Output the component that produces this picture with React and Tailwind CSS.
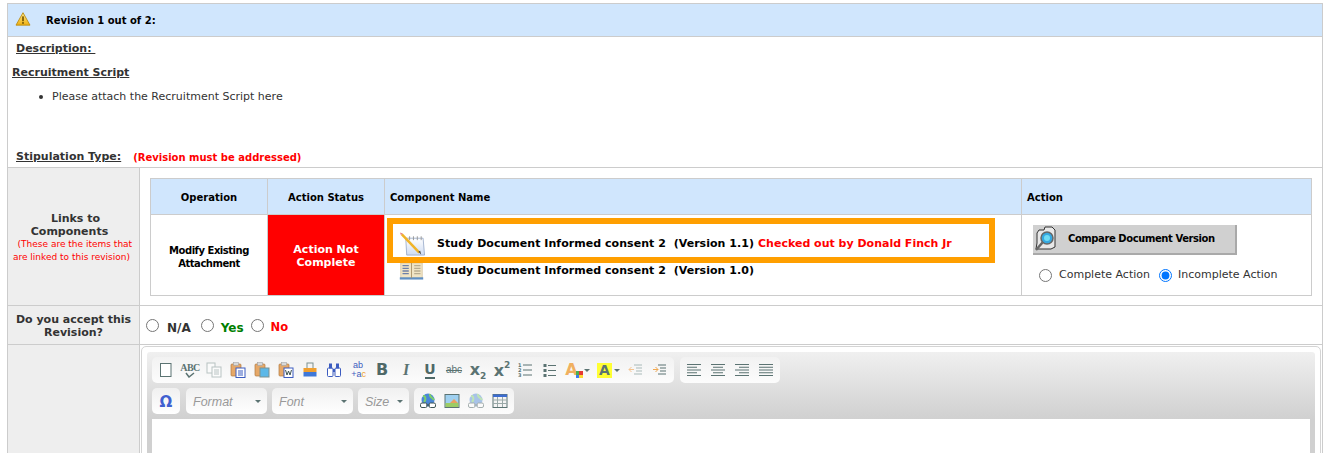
import React from "react";

const Warn = () => (
  <svg width="16" height="14" viewBox="0 0 18 16">
    <defs>
      <linearGradient id="w" x1="0" y1="0" x2="0" y2="1">
        <stop offset="0" stopColor="#ffe98a" />
        <stop offset="1" stopColor="#f0b010" />
      </linearGradient>
    </defs>
    <path d="M9 .8 17 15H1z" fill="url(#w)" stroke="#b98a10" strokeLinejoin="round" />
    <rect x="8" y="5" width="2" height="5.5" fill="#7a5a05" />
    <rect x="8" y="11.5" width="2" height="2" fill="#7a5a05" />
  </svg>
);

const Notepad = () => (
  <svg width="27" height="26" viewBox="0 0 28 26">
    <defs>
      <linearGradient id="n" x1="0" y1="0" x2="0" y2="1">
        <stop offset="0" stopColor="#ffffff" />
        <stop offset="1" stopColor="#cfdcf2" />
      </linearGradient>
    </defs>
    <path d="M7 7h18l1.500 17.500H8z" fill="url(#n)" stroke="#8fa3c4" strokeWidth="0.8" />
    <path d="M11 5v4M15 5v4M19 5v4M23 5v4" stroke="#999" strokeWidth="1" />
    <path d="M3 3 21 22" stroke="#f0b429" strokeWidth="2.600" />
    <path d="M1 1 4 2 2 4z" fill="#e8837a" />
    <path d="M20 21 23 24l-1-4z" fill="#444" />
  </svg>
);

const Book = () => (
  <svg width="25" height="18" viewBox="0 0 26 20">
    <path d="M1 1h11l1 1 1-1h11v17H1z" fill="#f0e4c4" stroke="#c9b486" strokeWidth="0.6" />
    <rect x="0" y="17" width="26" height="2.500" fill="#5f8fc4" />
    <path d="M13 1v17" stroke="#a8926a" />
    <path d="M3 4h7M3 7h7M3 10h7M3 13h7" stroke="#6d80a8" strokeWidth="1.400" />
    <path d="M16 4h7M16 7h7M16 10h7M16 13h7" stroke="#b7ac90" strokeWidth="1.400" />
  </svg>
);

const Magnifier = () => (
  <svg width="26" height="26" viewBox="0 0 26 26">
    <path d="M4 7 6 4h5l1-3h7l3 3v17l-4 2H3l1-6z" fill="#e8e8e8" stroke="#333" strokeWidth="1" />
    <circle cx="14" cy="12" r="6" fill="#35a8e0" stroke="#666" strokeWidth="1.500" />
    <circle cx="14" cy="12" r="3" fill="#6fdcf5" />
    <path d="M9.500 16.500 3 24" stroke="#666" strokeWidth="2.500" />
  </svg>
);

const Ico = ({ children }) => (
  <svg width="16" height="16" viewBox="0 0 16 16">{children}</svg>
);

const Paste = ({ children }) => (
  <Ico>
    <rect x="1" y="2" width="10" height="12" rx="1" fill="#e6a868" stroke="#b07a40" strokeWidth="0.7" />
    <rect x="3.500" y="0.500" width="5" height="3" fill="#d8d8d8" stroke="#999" strokeWidth="0.5" />
    {children}
  </Ico>
);

const Lines = ({ rows, color = "#5b7372" }) => (
  <Ico>
    {rows.map(([a, b], i) => (
      <path key={i} d={`M${a} ${2.500 + i * 2.750}H${b}`} stroke={color} strokeWidth="1" />
    ))}
  </Ico>
);

const G = "#5b7372";

const Txt = ({ className, children }) => (
  <span className={"leading-none " + className}>{children}</span>
);

const Globe = ({ faded }) => (
  <Ico>
    <g opacity={faded ? 0.45 : 1}>
      <circle cx="8" cy="7" r="6.500" fill="#4a86d8" />
      <path d="M3 3c3 0 3 4 1 6M10 1c-1 3 3 4 4 6" stroke="#7ccf6a" strokeWidth="2" fill="none" />
      <rect x="0.500" y="10" width="6.500" height="4.500" rx="1.500" fill="#fff" stroke="#3f5554" />
      <rect x="9" y="10" width="6.500" height="4.500" rx="1.500" fill="#fff" stroke="#3f5554" />
      <path d="M6 12h4" stroke="#3f5554" />
    </g>
  </Ico>
);

const tools1 = [
  <Ico><rect x="2.500" y="1.500" width="10.500" height="13" fill="#fff" stroke="#5b7372" /></Ico>,
  <span className="flex flex-col items-center">
    <Txt className="text-[10px] h-[9px] font-bold text-[#5b7372] tracking-[-0.5px] font-['Liberation_Serif',serif]">ABC</Txt>
    <svg width="12" height="6" viewBox="0 0 12 6"><path d="M2 1l3 4 5-4" stroke="#5b7372" strokeWidth="1.500" fill="none" /></svg>
  </span>,
  <Ico>
    <g opacity="0.5">
      <rect x="1" y="1" width="8" height="10" fill="#fff" stroke="#7d9190" />
      <rect x="6" y="5" width="9" height="10" fill="#fff" stroke="#7d9190" />
      <path d="M8 8h5M8 10h5M8 12h5" stroke="#7d9190" />
    </g>
  </Ico>,
  <Paste>
    <rect x="6" y="6" width="9" height="9.500" fill="#fff" stroke="#3c5cc0" />
    <path d="M8 9h5M8 11h5M8 13h5" stroke="#3c5cc0" />
  </Paste>,
  <Paste>
    <rect x="6" y="6" width="9" height="9" fill="#5cb8e8" stroke="#7d9190" />
  </Paste>,
  <Paste>
    <rect x="6" y="6" width="9" height="9.500" fill="#fff" stroke="#3c5cc0" />
    <path d="M7.500 8l1.500 5 1.500-4 1.500 4 1.500-5" stroke="#3f5554" fill="none" />
  </Paste>,
  <Ico>
    <rect x="5" y="1" width="6" height="6" fill="#f4f4f4" stroke="#7d9190" />
    <rect x="1.500" y="6" width="13" height="4" fill="#f0a030" />
    <rect x="1.500" y="10" width="13" height="4.500" fill="#3f78d8" />
  </Ico>,
  <Ico>
    <rect x="1.500" y="6" width="5.500" height="8.500" rx="1" fill="#fff" stroke="#3c5cc0" />
    <rect x="9" y="6" width="5.500" height="8.500" rx="1" fill="#fff" stroke="#3c5cc0" />
    <rect x="3" y="1.500" width="3" height="5" fill="#3c5cc0" />
    <rect x="10" y="1.500" width="3" height="5" fill="#3c5cc0" />
    <rect x="7" y="7" width="2" height="3" fill="#3c5cc0" />
  </Ico>,
  <span className="flex flex-col items-end w-4 font-['Liberation_Sans',sans-serif]">
    <span className="text-[9px] leading-[9px] h-[9px] text-[#3c5cc0] pr-[3px]">ab</span>
    <span className="text-[9px] leading-[9px] h-[9px] text-[#3c5cc0]">+a<span className="text-[#f0a030]">c</span></span>
  </span>,
  <Txt className="text-[16px] font-bold text-[#4f6968] font-['DejaVu_Sans',sans-serif]">B</Txt>,
  <Txt className="text-[16px] font-bold italic text-[#5b7372] font-['Liberation_Serif',serif]">I</Txt>,
  <span className="flex flex-col items-center">
    <Txt className="text-[14px] font-bold text-[#4f6968] font-['DejaVu_Sans',sans-serif]">U</Txt>
    <span className="w-[10px] h-[2px] bg-[#4f6968] mt-[1px]" />
  </span>,
  <Txt className="text-[10px] line-through text-[#5b7372] font-['Liberation_Sans',sans-serif]">abc</Txt>,
  <span className="flex items-end">
    <Txt className="text-[16px] font-bold text-[#5b7372] font-['DejaVu_Sans',sans-serif]">x</Txt>
    <Txt className="text-[9px] font-bold text-[#5b7372] font-['DejaVu_Sans',sans-serif] translate-y-[3px]">2</Txt>
  </span>,
  <span className="flex items-start">
    <Txt className="text-[16px] font-bold text-[#5b7372] font-['DejaVu_Sans',sans-serif] mt-[2px]">x</Txt>
    <Txt className="text-[9px] font-bold text-[#5b7372] font-['DejaVu_Sans',sans-serif]">2</Txt>
  </span>,
  <span className="flex items-center w-[16px]">
    <span className="flex flex-col text-[5px] leading-[5px] font-bold text-[#5b7372] font-['DejaVu_Sans',sans-serif]">
      <span>1</span><span>2</span><span>3</span>
    </span>
    <svg width="12" height="16" viewBox="0 0 12 16">
      <path d="M2 3h9M2 8h9M2 13h9" stroke={G} />
    </svg>
  </span>,
  <Ico>
    <rect x="1.500" y="2" width="3" height="3" fill={G} />
    <rect x="1.500" y="7" width="3" height="3" fill={G} />
    <rect x="1.500" y="12" width="3" height="3" fill={G} />
    <path d="M6 3.500h8M6 8.500h8M6 13.500h8" stroke={G} />
  </Ico>,
];

const Caret = () => (
  <span className="w-0 h-0 border-x-[3px] border-x-transparent border-t-[3px] border-t-[#5b7372]" />
);

const Btn = ({ children, w = "w-6" }) => (
  <span className={`${w} h-[26px] flex items-center justify-center shrink-0`}>{children}</span>
);

const Combo = ({ label, w }) => (
  <span className={`${w} h-[26px] rounded-[5px] bg-gradient-to-b from-[#f0f0f0] to-white flex items-center justify-between pl-[7px] pr-[6px] shrink-0`}>
    <span className="font-['Liberation_Sans',sans-serif] italic text-[12.5px] text-[#999] translate-y-[1px]">{label}</span>
    <Caret />
  </span>
);

const Group = ({ children }) => (
  <span className="h-[26px] rounded-[5px] bg-gradient-to-b from-[#f2f2f2] to-[#fcfcfc] flex items-center px-[2px] shrink-0">
    {children}
  </span>
);

const Th = ({ className = "", children }) => (
  <div className={"flex items-center pt-[2px] font-bold text-[10px] text-black bg-[#d0e6fd] " + className}>{children}</div>
);

export default function App() {
  return (
    <div className="h-[453px] w-[1334px] overflow-hidden bg-white font-['DejaVu_Sans','Liberation_Sans',sans-serif] text-[#333] pt-[3px] pl-[7px]">
      <div className="w-[1316px] h-[600px] border-x border-t border-[#ccc] flex flex-col">
        {/* header */}
        <div className="h-[33px] bg-[#d0e6fd] border-b border-[#ccc] flex items-center shrink-0 pl-[7px]">
          <span className="-translate-y-[1px] flex"><Warn /></span>
          <span className="ml-[15px] font-bold text-[10px] text-black">Revision 1 out of 2:</span>
        </div>

        {/* description */}
        <div className="h-[131px] border-b border-[#ccc] shrink-0 flex flex-col text-[#333]">
          <div className="pl-[8px] pt-[4px] h-[28px] font-bold text-[11px] underline leading-[16px]">Description:&nbsp;</div>
          <div className="pl-[4px] h-[23px] font-bold text-[11px] underline leading-[16px]">Recruitment Script</div>
          <div className="pl-[31px] flex items-center h-[18px] text-[11px]">
            <span className="w-[4px] h-[4px] rounded-full bg-[#333] mr-[9px]" />
            Please attach the Recruitment Script here
          </div>
          <div className="mt-[43px] pl-[8px] flex items-center">
            <span className="font-bold text-[11px] underline">Stipulation Type:</span>
            <span className="ml-[12px] font-bold text-[10px] text-[#f00]">(Revision must be addressed)</span>
          </div>
        </div>

        {/* links row */}
        <div className="h-[138px] border-b border-[#ccc] flex shrink-0">
          <div className="w-[132px] shrink-0 bg-[#eee] border-r border-[#ccc] flex flex-col items-center justify-center text-center pt-[3px]">
            <div className="font-bold text-[11px] leading-[13px] pl-[4px]">Links to</div>
            <div className="font-bold text-[11px] leading-[13px] pr-[8px]">Components</div>
            <div className="text-[9px] leading-[13px] text-[#f00] pr-[3px]">
              &nbsp;&nbsp;(These are the items that
            </div>
            <div className="text-[9px] leading-[13px] text-[#f00] pr-[4px]">are linked to this revision)</div>
          </div>
          <div className="flex-1 pl-[10px] pt-[10px] relative">
            <div className="w-[1162px] h-[118px] border border-[#ccc] flex flex-col">
              <div className="h-[36px] border-b border-[#ccc] flex shrink-0">
                <Th className="w-[117px] justify-center border-r border-[#ccc]">Operation</Th>
                <Th className="w-[117px] justify-center border-r border-[#ccc]">Action Status</Th>
                <Th className="w-[637px] pl-[5px] border-r border-[#ccc]">Component Name</Th>
                <Th className="flex-1 pl-[5px]">Action</Th>
              </div>
              <div className="flex-1 flex text-black">
                <div className="w-[117px] border-r border-[#ccc] flex items-center justify-center text-center font-bold text-[10px] tracking-[-0.47px] leading-[13px] pt-[3px]">
                  Modify Existing<br />Attachment
                </div>
                <div className="w-[117px] border-r border-[#ccc] bg-[#f00] text-white flex items-center justify-center text-center font-bold text-[11px] leading-[13px] pt-[2px]">
                  Action Not<br />Complete
                </div>
                <div className="w-[637px] border-r border-[#ccc] flex flex-col pl-[14px] pt-[15px] text-[11px] font-bold">
                  <div className="flex items-center h-[28px]">
                    <span className="w-[22px]"><Notepad /></span>
                    <span className="ml-[16px] tracking-[0.04px]">Study Document Informed consent 2&nbsp; (Version 1.1)</span>
                    <span className="ml-[4px] text-[#f00]">Checked out by Donald Finch Jr</span>
                  </div>
                  <div className="flex items-center h-[20px] mt-[3px]">
                    <span className="w-[22px]"><Book /></span>
                    <span className="ml-[16px] tracking-[0.04px]">Study Document Informed consent 2&nbsp; (Version 1.0)</span>
                  </div>
                </div>
                <div className="flex-1 pl-[11px] pt-[10px] flex flex-col">
                  <button className="w-[204px] h-[30px] bg-[#d0d0d0] border-r-2 border-b-2 border-[#a9a9a9] flex items-center font-bold text-[10px] tracking-[-0.42px] text-black p-0 whitespace-nowrap">
                    <Magnifier />
                    <span className="ml-[9px] -translate-y-[1px]">Compare Document Version</span>
                  </button>
                  <div className="flex items-center mt-[12px] ml-[6px] text-[11px] text-[#333]">
                    <input type="radio" name="ca" className="m-0 w-[13px] h-[13px]" readOnly />
                    <span className="ml-[7px]">Complete Action</span>
                    <input type="radio" name="ca" defaultChecked className="m-0 ml-[9px] w-[13px] h-[13px]" />
                    <span className="ml-[6px]">Incomplete Action</span>
                  </div>
                </div>
              </div>
            </div>
            {/* highlight over the first version row */}
            <div className="absolute left-[247px] top-[50px] w-[608px] h-[45px] border-[6px] border-[#ff9f00]" />
          </div>
        </div>

        {/* accept row */}
        <div className="h-[39px] border-b border-[#ccc] flex shrink-0">
          <div className="w-[132px] shrink-0 bg-[#eee] border-r border-[#ccc] flex items-center justify-center text-center font-bold text-[11px] leading-[13px] pt-[1px]">
            Do you accept this<br />Revision?
          </div>
          <div className="flex items-center pl-[6px] font-bold text-[12px] pt-[6px]">
            <input type="radio" name="acc" className="m-0 w-[13px] h-[13px] -translate-y-[3px]" />
            <span className="ml-[8px]">N/A</span>
            <input type="radio" name="acc" className="m-0 ml-[10px] w-[13px] h-[13px] -translate-y-[3px]" />
            <span className="ml-[7px] text-[#008000]">Yes</span>
            <input type="radio" name="acc" className="m-0 ml-[7px] w-[13px] h-[13px] -translate-y-[3px]" />
            <span className="ml-[7px] text-[#f00] text-[11.5px]">No</span>
          </div>
        </div>

        {/* editor row */}
        <div className="flex-1 flex">
          <div className="w-[132px] shrink-0 bg-[#eee] border-r border-[#ccc]" />
          <div className="flex-1 pl-[1px] pr-[1px] pt-[1px]">
            <div className="h-[200px] border border-[#d4d4d4] rounded-[5px] p-[5px]">
              <div className="h-[67px] bg-gradient-to-b from-[#f0f0f0] to-[#d0d0d0] rounded-t-[3px] pt-[5px] pl-[5px] flex flex-col gap-[5px]">
                <div className="flex gap-[6px]">
                  <Group>
                    {tools1.map((t, i) => (
                      <Btn key={i}>{t}</Btn>
                    ))}
                    <Btn w="w-[31px]">
                      <span className="relative flex items-center gap-[1px]">
                        <Txt className="text-[16px] font-bold text-[#f0b060] font-['DejaVu_Sans',sans-serif]">A</Txt>
                        <span className="grid grid-cols-2 w-[7px] h-[7px] self-end -ml-[3px]">
                          <span className="bg-[#4caf50]" /><span className="bg-[#e53935]" />
                          <span className="bg-[#3f78f0]" /><span className="bg-[#fdd835]" />
                        </span>
                        <Caret />
                      </span>
                    </Btn>
                    <Btn w="w-[31px]">
                      <span className="flex items-center gap-[2px]">
                        <Txt className="w-[15px] h-[15px] bg-[#ffff33] flex items-center justify-center text-[14px] font-bold text-[#5b7372] font-['DejaVu_Sans',sans-serif]">A</Txt>
                        <Caret />
                      </span>
                    </Btn>
                    <Btn>
                      <Ico>
                        <path d="M6 3h8M8 6h6M8 9h6M6 12h8" stroke="#a9bab9" />
                        <path d="M1 7.500h5M3.500 5 1 7.500 3.500 10" stroke="#f5c490" fill="none" />
                      </Ico>
                    </Btn>
                    <Btn>
                      <Ico>
                        <path d="M6 3h8M8 6h6M8 9h6M6 12h8" stroke={G} strokeWidth="1.200" />
                        <path d="M1 7.500h5M3.500 5 6 7.500 3.500 10" stroke="#f0a850" fill="none" />
                      </Ico>
                    </Btn>
                  </Group>
                  <Group>
                    <Btn><Lines rows={[[1, 15], [1, 11], [1, 15], [1, 11], [1, 15]]} /></Btn>
                    <Btn><Lines rows={[[1, 15], [3, 13], [1, 15], [3, 13], [1, 15]]} /></Btn>
                    <Btn><Lines rows={[[1, 15], [5, 15], [1, 15], [5, 15], [1, 15]]} /></Btn>
                    <Btn><Lines rows={[[1, 15], [1, 15], [1, 15], [1, 15], [1, 15]]} /></Btn>
                  </Group>
                </div>
                <div className="flex gap-[5px]">
                  <span className="w-[28px] h-[26px] mr-[1px] rounded-[5px] bg-gradient-to-b from-[#f0f0f0] to-white flex items-center justify-center shrink-0">
                    <span className="font-['DejaVu_Sans',sans-serif] font-bold text-[15px] text-[#4060d0] translate-y-[1px]">Ω</span>
                  </span>
                  <Combo label="Format" w="w-[81px]" />
                  <Combo label="Font" w="w-[81px]" />
                  <Combo label="Size" w="w-[51px]" />
                  <Group>
                    <Btn><Globe /></Btn>
                    <Btn>
                      <Ico>
                        <rect x="1" y="1.500" width="14" height="13" fill="#9fd0f0" stroke={G} />
                        <rect x="1.500" y="10" width="13" height="4" fill="#9ccc65" />
                        <path d="M6 10l4-4 4 4z" fill="#e8a060" />
                      </Ico>
                    </Btn>
                    <Btn><Globe faded /></Btn>
                    <Btn>
                      <Ico>
                        <rect x="1" y="1.500" width="14" height="13" fill="#f4f4f4" stroke={G} />
                        <rect x="1" y="1.500" width="14" height="2.500" fill="#3c6cd0" />
                        <path d="M1 7h14M1 10.500h14M5.500 4v10M10.500 4v10" stroke="#9aa9a8" />
                      </Ico>
                    </Btn>
                  </Group>
                </div>
              </div>
              <div className="h-[120px] bg-[#d0d0d0] px-[5px]">
                <div className="h-full bg-white" />
              </div>
            </div>
          </div>
        </div>
      </div>
    </div>
  );
}
